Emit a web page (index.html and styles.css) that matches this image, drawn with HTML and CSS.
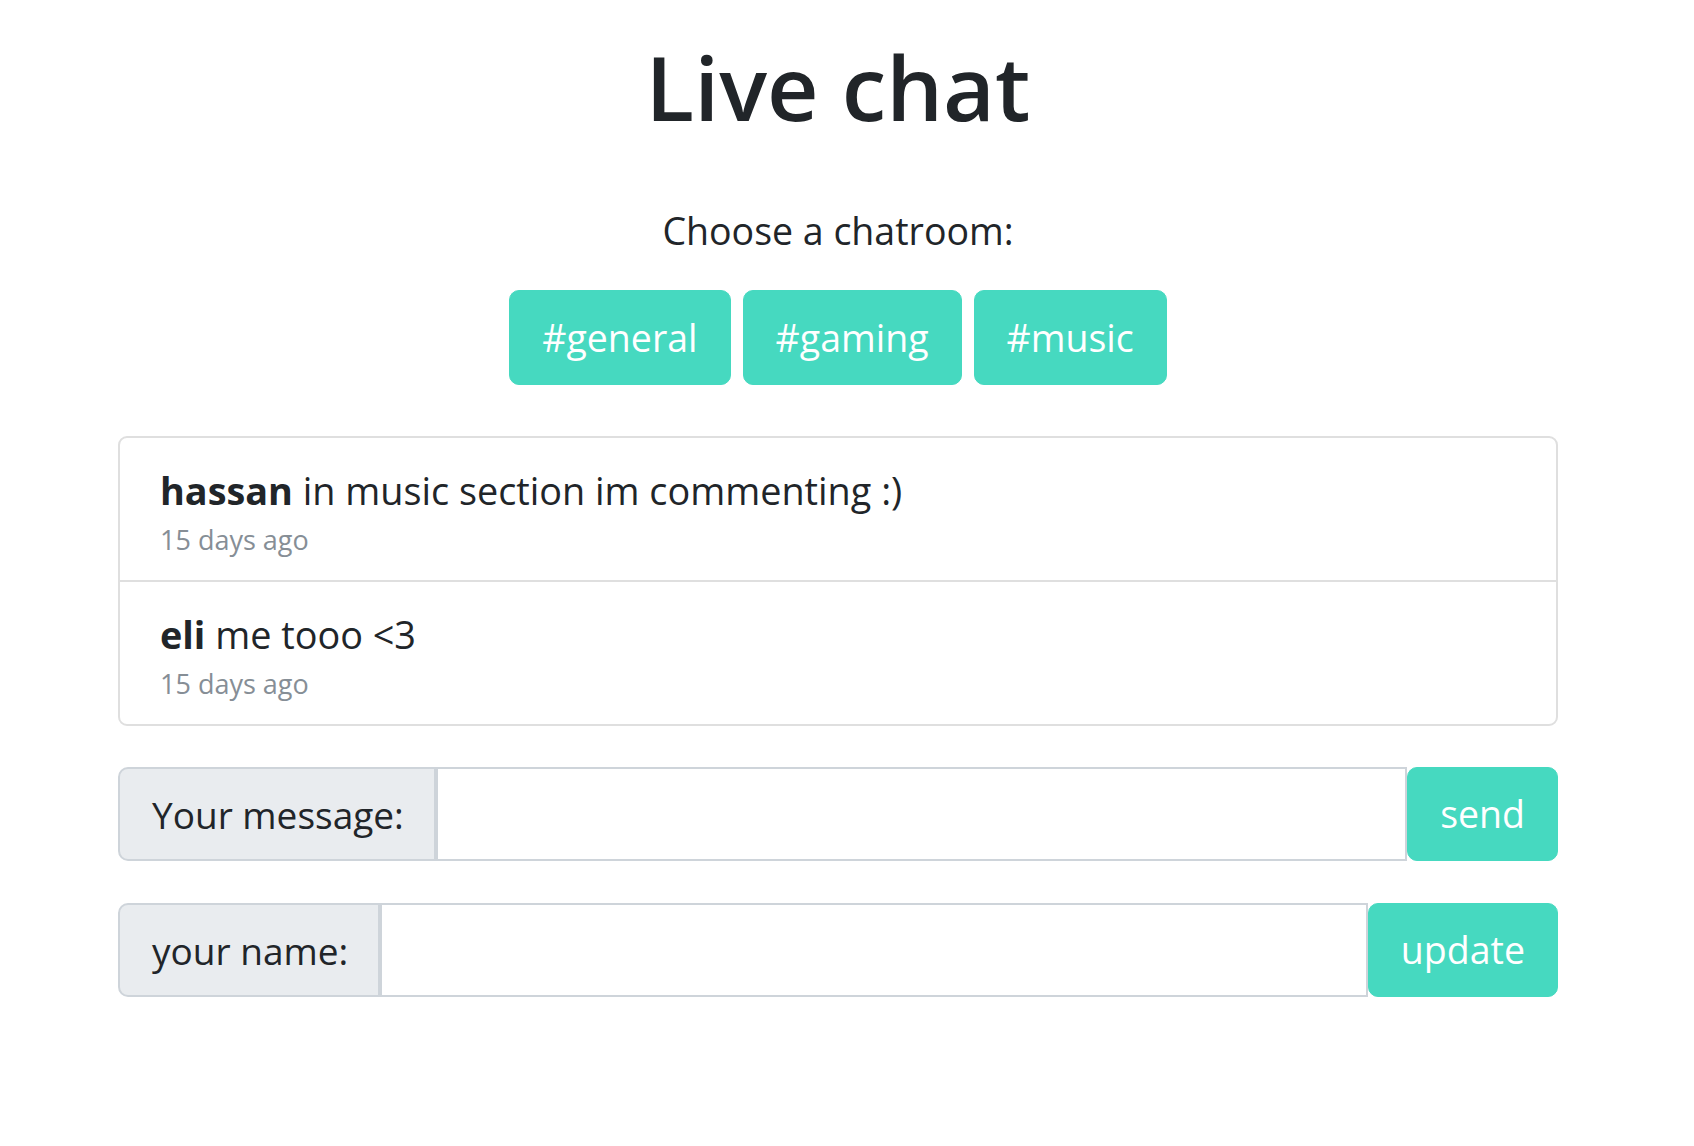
FILE: index.html
```html
<!DOCTYPE html>
<html lang="en">
<head>
<meta charset="utf-8">
<title>Live chat</title>
<link rel="stylesheet" href="styles.css">
</head>
<body>
<div class="page">
  <h1 class="title">Live chat</h1>
  <p class="choose">Choose a chatroom:</p>
  <div class="rooms">
    <button class="btn">#general</button>
    <button class="btn">#gaming</button>
    <button class="btn">#music</button>
  </div>
  <ul class="chat-list">
    <li class="chat-item">
      <div class="msg"><span class="user">hassan</span> in music section im commenting :)</div>
      <div class="time">15 days ago</div>
    </li>
    <li class="chat-item">
      <div class="msg"><span class="user">eli</span> me tooo &lt;3</div>
      <div class="time">15 days ago</div>
    </li>
  </ul>
  <form class="input-group first">
    <label class="input-label">Your message:</label>
    <input class="input-field" type="text">
    <button class="btn btn-side" type="button">send</button>
  </form>
  <form class="input-group">
    <label class="input-label">your name:</label>
    <input class="input-field" type="text">
    <button class="btn btn-side" type="button">update</button>
  </form>
</div>
</body>
</html>
```
FILE: styles.css
```css
* { box-sizing: border-box; }

body {
  margin: 0;
  padding: 0 18px 0 0;
  background: #ffffff;
  color: #212529;
  font-family: "Open Sans", "Noto Sans", sans-serif;
}

.page {
  width: 1440px;
  margin: 0 auto;
}

.title {
  margin: 32px 0 0;
  font-size: 89.5px;
  line-height: 108px;
  font-weight: 600;
  text-align: center;
  color: #212529;
}

.choose {
  margin: 63px 0 0;
  font-size: 37.5px;
  line-height: 56px;
  font-weight: 400;
  text-align: center;
}

.rooms {
  margin-top: 31px;
  display: flex;
  justify-content: center;
  gap: 12px;
}

.btn {
  height: 95px;
  padding: 0 32px;
  border: 1px solid #46d9c0;
  border-radius: 10px;
  background: #46d9c0;
  color: #ffffff;
  font-family: "Open Sans", "Noto Sans", sans-serif;
  font-size: 37.5px;
  line-height: 61px;
  font-weight: 400;
  cursor: pointer;
}

.chat-list {
  list-style: none;
  margin: 51px 0 0;
  padding: 0;
  border: 2px solid #dfdfdf;
  border-radius: 9px;
}

.chat-item {
  padding: 25px 40px 20px;
}

.chat-item + .chat-item {
  border-top: 2px solid #dfdfdf;
}

.msg {
  font-size: 37.8px;
  line-height: 56px;
}

.user {
  font-weight: 700;
}

.time {
  font-size: 27px;
  line-height: 41px;
  color: #868e96;
}

.input-group {
  display: flex;
  height: 94px;
  margin-top: 42px;
}

.input-group.first {
  margin-top: 41px;
}

.input-label {
  display: flex;
  align-items: center;
  padding: 0 30px 0 32px;
  background: #e9ecef;
  border: 2px solid #ced4da;
  border-radius: 10px 0 0 10px;
  font-size: 37px;
  color: #212529;
  white-space: nowrap;
}

.input-field {
  flex: 1;
  min-width: 0;
  height: 94px;
  border: 2px solid #ced4da;
  background: #ffffff;
  font-size: 37px;
  padding: 0 24px;
  outline: none;
}

.btn-side {
  height: 94px;
  line-height: 60px;
}
```
